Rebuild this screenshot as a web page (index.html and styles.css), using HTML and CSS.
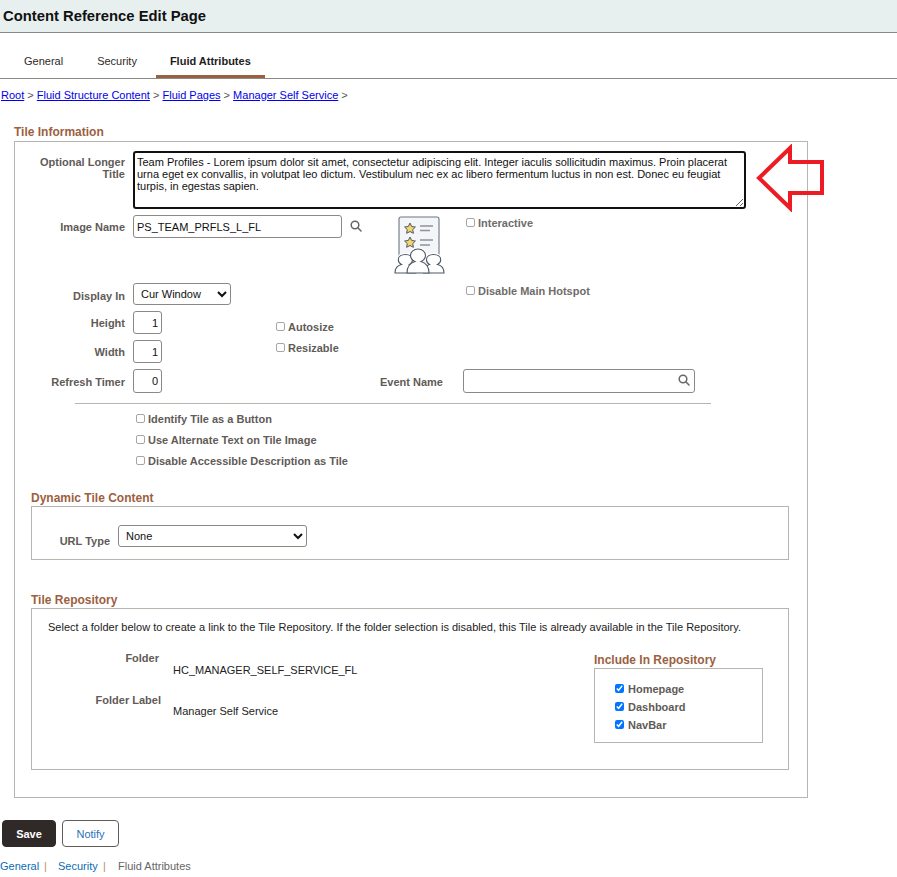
FILE: index.html
```html
<!DOCTYPE html>
<html lang="en">
<head>
<meta charset="utf-8">
<title>Content Reference Edit Page</title>
<link rel="stylesheet" href="styles.css">
</head>
<body>
<header class="page-header"><h1>Content Reference Edit Page</h1></header>
<nav class="tabs">
  <a class="tab">General</a>
  <a class="tab">Security</a>
  <a class="tab tab-active">Fluid Attributes</a>
</nav>
<div class="breadcrumb"><a href="#">Root</a> &gt; <a href="#">Fluid Structure Content</a> &gt; <a href="#">Fluid Pages</a> &gt; <a href="#">Manager Self Service</a> &gt;</div>

<h2 class="section-title title-tile">Tile Information</h2>
<section class="tile-box">
  <div class="form-grid">
    <label class="field-label r1 long-label">Optional Longer Title</label>
    <textarea class="long-title r1 c-wide">Team Profiles - Lorem ipsum dolor sit amet, consectetur adipiscing elit. Integer iaculis sollicitudin maximus. Proin placerat urna eget ex convallis, in volutpat leo dictum. Vestibulum nec ex ac libero fermentum luctus in non est. Donec eu feugiat turpis, in egestas sapien.</textarea>

    <label class="field-label r2 label-image">Image Name</label>
    <div class="image-name r2">
      <input class="text-input image-input" type="text" value="PS_TEAM_PRFLS_L_FL">
      <svg class="search-icon" viewBox="0 0 12 12"><circle cx="5" cy="5" r="3.8"/><path d="M7.8 7.800 11 11"/></svg>
    </div>
    <svg class="tile-image" viewBox="0 0 52 60">
      <defs>
        <g id="people">
          <path d="M2 58c0-5 2.500-7.500 6.500-8.500-2-1-3.200-2.800-3.200-4.800 0-3 3-5.200 7.200-5.200s7 2.200 7 5.200c0 2-1 3.800-3 4.800 3.500 1 5.500 3.500 6 8.500z"/>
          <path d="M51 58c0-5-2.500-7.500-6.500-8.500 2-1 3.200-2.800 3.200-4.800 0-3-3-5.200-7.200-5.200s-7 2.200-7 5.200c0 2 1 3.800 3 4.800-3.500 1-5.500 3.500-6 8.500z"/>
          <path d="M14 58c0-6.500 3-10 8-11.500-3-1.500-4.500-3.700-4.500-6 0-3.800 3.300-6.500 7.500-6.500s7.500 2.700 7.500 6.500c0 2.300-1.500 4.500-4.500 6 5 1.500 8 5 8 11.500z"/>
        </g>
      </defs>
      <rect class="doc" x="6" y="2" width="40" height="44" rx="2"/>
      <path class="star" d="M17 8.100l1.700 3.400 3.700.5-2.700 2.600.7 3.700-3.400-1.800-3.400 1.800.7-3.700-2.700-2.600 3.700-.5z"/>
      <path class="star" d="M17 22.100l1.700 3.400 3.700.5-2.700 2.600.7 3.700-3.400-1.800-3.400 1.800.7-3.700-2.700-2.600 3.700-.5z"/>
      <path class="doc-line" d="M27 11h13M27 15.500h10M27 25h13M27 30h10"/>
      <use class="halo" href="#people"/>
      <use class="person" href="#people"/>
    </svg>
    <label class="check-field r2 c-right top-check muted"><input class="check" type="checkbox">Interactive</label>

    <label class="field-label r3 label-display">Display In</label>
    <div class="r3 c-two"><select class="select select-display"><option>Cur Window</option></select></div>
    <label class="check-field r3 c-right hotspot muted"><input class="check" type="checkbox">Disable Main Hotspot</label>

    <label class="field-label r4 label-size">Height</label>
    <div class="r4 c-two"><input class="text-input num-input" type="text" value="1"></div>
    <div class="size-checks">
      <label class="check-field"><input class="check" type="checkbox">Autosize</label>
      <label class="check-field"><input class="check" type="checkbox">Resizable</label>
    </div>

    <label class="field-label r5 label-size">Width</label>
    <div class="r5 c-two"><input class="text-input num-input" type="text" value="1"></div>

    <label class="field-label r6">Refresh Timer</label>
    <div class="r6 c-two"><input class="text-input num-input refresh-input" type="text" value="0"></div>
    <label class="field-label r6 event-label">Event Name</label>
    <div class="event-field r6 c-right">
      <input class="text-input event-input" type="text">
      <svg class="search-icon event-search" viewBox="0 0 12 12"><circle cx="5" cy="5" r="3.8"/><path d="M7.8 7.800 11 11"/></svg>
    </div>
  </div>

  <hr class="divider">

  <div class="option-list">
    <label class="check-field"><input class="check" type="checkbox">Identify Tile as a Button</label>
    <label class="check-field"><input class="check" type="checkbox">Use Alternate Text on Tile Image</label>
    <label class="check-field"><input class="check" type="checkbox">Disable Accessible Description as Tile</label>
  </div>

  <h2 class="section-title title-dynamic">Dynamic Tile Content</h2>
  <div class="inner-box dynamic-box">
    <label class="field-label url-label">URL Type</label>
    <select class="select select-url"><option>None</option></select>
  </div>

  <h2 class="section-title title-repo">Tile Repository</h2>
  <div class="inner-box repo-box">
    <p class="repo-note">Select a folder below to create a link to the Tile Repository. If the folder selection is disabled, this Tile is already available in the Tile Repository.</p>
    <div class="repo-body">
      <dl class="repo-fields">
        <dt class="folder-key">Folder</dt>
        <dd class="folder-val">HC_MANAGER_SELF_SERVICE_FL</dd>
        <dt class="label-key">Folder Label</dt>
        <dd class="label-val">Manager Self Service</dd>
      </dl>
      <div class="include">
        <h2 class="section-title title-include">Include In Repository</h2>
        <div class="include-box">
          <label class="check-field"><input class="check-on" type="checkbox" checked>Homepage</label>
          <label class="check-field"><input class="check-on" type="checkbox" checked>Dashboard</label>
          <label class="check-field"><input class="check-on" type="checkbox" checked>NavBar</label>
        </div>
      </div>
    </div>
  </div>
</section>

<div class="actions">
  <button class="btn btn-save" type="button">Save</button>
  <button class="btn btn-notify" type="button">Notify</button>
</div>
<footer class="foot-links">
  <a class="foot-link foot-general">General</a><span class="sep">|</span>
  <a class="foot-link foot-security">Security</a><span class="sep">|</span>
  <span class="foot-current">Fluid Attributes</span>
</footer>

<svg class="callout" viewBox="0 0 72 68"><polygon points="5,34 36,4 36,18 68,18 68,49 36,49 36,64"/></svg>
</body>
</html>
```
FILE: styles.css
```css
* { box-sizing: border-box; }
html, body { margin: 0; padding: 0; }
body {
  position: relative;
  height: 877px;
  overflow: hidden;
  background: #fff;
  font-family: "Liberation Sans", Arial, sans-serif;
  font-size: 11px;
  color: #333;
}
.page-header {
  height: 33px;
  background: #e7f0ef;
  border-bottom: 1px solid #8c8884;
  display: flex;
  align-items: center;
  padding-left: 3px;
}
.page-header h1 { margin: 0; font-size: 14.8px; font-weight: bold; color: #111; }
.tabs {
  height: 46px;
  display: flex;
  padding-left: 10px;
  gap: 6px;
  border-bottom: 1px solid #8c8884;
  padding-top: 21px;
}
.tab {
  padding: 0 14px;
  height: 24px;
  line-height: 14px;
  color: #2e2a27;
  font-size: 11px;
}
.tab-active {
  margin-left: -1px;
  font-weight: bold;
  color: #1d1d1d;
  border-bottom: 3px solid #9c5f3f;
}
.breadcrumb { margin: 9px 0 0 1px; line-height: 14px; color: #555; font-size: 11px; }
.breadcrumb a { color: #0000ee; }
.section-title { margin: 0; font-size: 12px; line-height: 14px; font-weight: bold; color: #9c5f3f; }
.title-tile { margin: 23px 0 0 14px; height: 16px; }
.tile-box {
  width: 794px;
  height: 657px;
  margin-left: 14px;
  border: 1px solid #b8b4ae;
  padding-top: 9px;
}
.form-grid {
  display: grid;
  grid-template-columns: 118px 143px 117px 70px 330px;
  grid-template-rows: 64px 68px 28px 29px 29px 34px;
}
.r1 { grid-row: 1; }
.r2 { grid-row: 2; }
.r3 { grid-row: 3; }
.r4 { grid-row: 4; }
.r5 { grid-row: 5; }
.r6 { grid-row: 6; }
.c-two { grid-column: 2; }
.c-wide { grid-column: 2 / 6; }
.c-right { grid-column: 5; }
.field-label {
  grid-column: 1;
  text-align: right;
  padding-right: 8px;
  font-weight: bold;
  color: #5f5b57;
  line-height: 14px;
  padding-top: 6px;
}
.long-label { padding-top: 5px; line-height: 12px; }
.label-image { padding-top: 5px; }
.label-display { padding-top: 6px; }
.label-size { padding-top: 5px; }
.long-title {
  width: 613px;
  height: 58px;
  border: 2px solid #111;
  border-radius: 3px;
  padding: 3px 2px 1px;
  font-family: "Liberation Sans", Arial, sans-serif;
  font-size: 11px;
  line-height: 12px;
  color: #111;
  outline: none;
}
.image-name { grid-column: 2 / 4; display: flex; align-items: flex-start; }
.text-input {
  height: 23px;
  border: 1px solid #8c8884;
  border-radius: 3px;
  font-family: "Liberation Sans", Arial, sans-serif;
  font-size: 11px;
  color: #111;
  padding: 0 3px;
  background: #fff;
}
.image-input { width: 209px; }
.search-icon { width: 12px; height: 12px; fill: none; stroke: #666; stroke-width: 1.5; stroke-linecap: round; margin: 5px 0 0 8px; }
.tile-image { grid-column: 4; grid-row: 2; width: 52px; height: 60px; }
.doc { fill: #f3f5f8; stroke: #6b7684; stroke-width: 1.1; }
.star { fill: #f6d568; stroke: #4e5864; stroke-width: 1; }
.doc-line { fill: none; stroke: #8b95a0; stroke-width: 1.4; }
.halo { fill: #fff; stroke: #fff; stroke-width: 3.5; }
.person { fill: #fff; stroke: #4e5864; stroke-width: 1.1; }
.check-field {
  display: flex;
  align-items: center;
  gap: 3px;
  height: 14px;
  font-weight: bold;
  color: #5f5b57;
}
.check-field.muted { color: #6f6c69; padding-left: 3px; }
.top-check { margin-top: 1px; }
.hotspot { margin-top: 1px; }
.check {
  appearance: none;
  width: 9px;
  height: 9px;
  margin: 0 0 2px;
  border: 1px solid #a6a6a6;
  border-radius: 2px;
  background: #fff;
  flex: none;
}
.check-on { width: 9px; height: 9px; margin: 0 0 2px; flex: none; accent-color: #0075ff; }
.include-box .check-field { gap: 4px; }
.select {
  height: 23px;
  border: 1px solid #8c8884;
  border-radius: 3px;
  background: #fff;
  font-family: "Liberation Sans", Arial, sans-serif;
  font-size: 11px;
  color: #111;
  padding-left: 3px;
}
.select-display { width: 98px; height: 22px; }
.num-input { width: 29px; text-align: right; }
.refresh-input { height: 24px; }
.size-checks {
  grid-column: 3;
  grid-row: 4 / 6;
  display: flex;
  flex-direction: column;
  gap: 7px;
  padding-top: 9px;
}
.event-label { grid-column: 3 / 5; padding-right: 20px; padding-top: 6px; }
.event-field { position: relative; width: 232px; height: 24px; }
.event-input { width: 232px; height: 24px; }
.event-search { position: absolute; right: 5px; top: 0; margin: 5px 0 0; }
.divider { width: 636px; margin: 0 0 0 60px; height: 1px; border: 0; background: #b8b4ae; }
.option-list {
  margin: 8px 0 0 121px;
  display: flex;
  flex-direction: column;
  gap: 7px;
}
.title-dynamic { margin: 23px 0 0 16px; height: 15px; }
.inner-box { width: 758px; margin-left: 16px; border: 1px solid #b8b4ae; }
.dynamic-box { height: 54px; display: flex; align-items: flex-start; padding-top: 18px; }
.url-label { width: 86px; padding-top: 9px; }
.select-url { width: 189px; height: 22px; }
.title-repo { margin: 33px 0 0 16px; height: 15px; }
.repo-box { height: 162px; padding: 12px 0 0 16px; position: relative; }
.repo-note { margin: 0; line-height: 13px; color: #222; }
.repo-body { display: flex; margin-top: 6px; }
.repo-fields {
  margin: 0;
  width: 546px;
  display: grid;
  grid-template-columns: 125px 1fr;
  grid-auto-rows: min-content;
  align-content: start;
}
.repo-fields dt { font-weight: bold; color: #5f5b57; text-align: right; line-height: 13px; }
.repo-fields dd { margin: 0; color: #222; line-height: 13px; }
.folder-key { grid-column: 1; grid-row: 1; margin-top: 12px; padding-right: 14px; }
.folder-val { grid-column: 2; grid-row: 1; margin-top: 24px !important; }
.label-key { grid-column: 1; grid-row: 2; margin-top: 17px; padding-right: 12px; }
.label-val { grid-column: 2; grid-row: 2; margin-top: 28px !important; }
.include { width: 169px; padding-top: 13px; }
.title-include { height: 15px; line-height: 14px; }
.include-box {
  width: 169px;
  height: 75px;
  border: 1px solid #b8b4ae;
  padding: 13px 0 0 20px;
  display: flex;
  flex-direction: column;
  gap: 4px;
}
.actions { display: flex; gap: 6px; margin: 22px 0 0 2px; }
.btn {
  height: 27px;
  border-radius: 4px;
  font-family: "Liberation Sans", Arial, sans-serif;
  font-size: 11px;
  padding: 0;
}
.btn-save { width: 54px; background: #2f2a27; color: #fff; font-weight: bold; border: 1px solid #2f2a27; }
.btn-notify { width: 57px; background: #fff; color: #2a6fb8; border: 1px solid #5f5b57; }
.foot-links { display: flex; margin-top: 12px; line-height: 14px; font-size: 11px; }
.foot-link { color: #0a6cb4; }
.foot-general { width: 44px; }
.foot-security { width: 45px; margin-left: 10px; }
.sep { color: #c08a6c; width: 4px; }
.foot-current { margin-left: 11px; color: #666; }
.callout {
  position: absolute;
  left: 754px;
  top: 144px;
  width: 72px;
  height: 68px;
  fill: none;
  stroke: #ed1c24;
  stroke-width: 4;
}
```
